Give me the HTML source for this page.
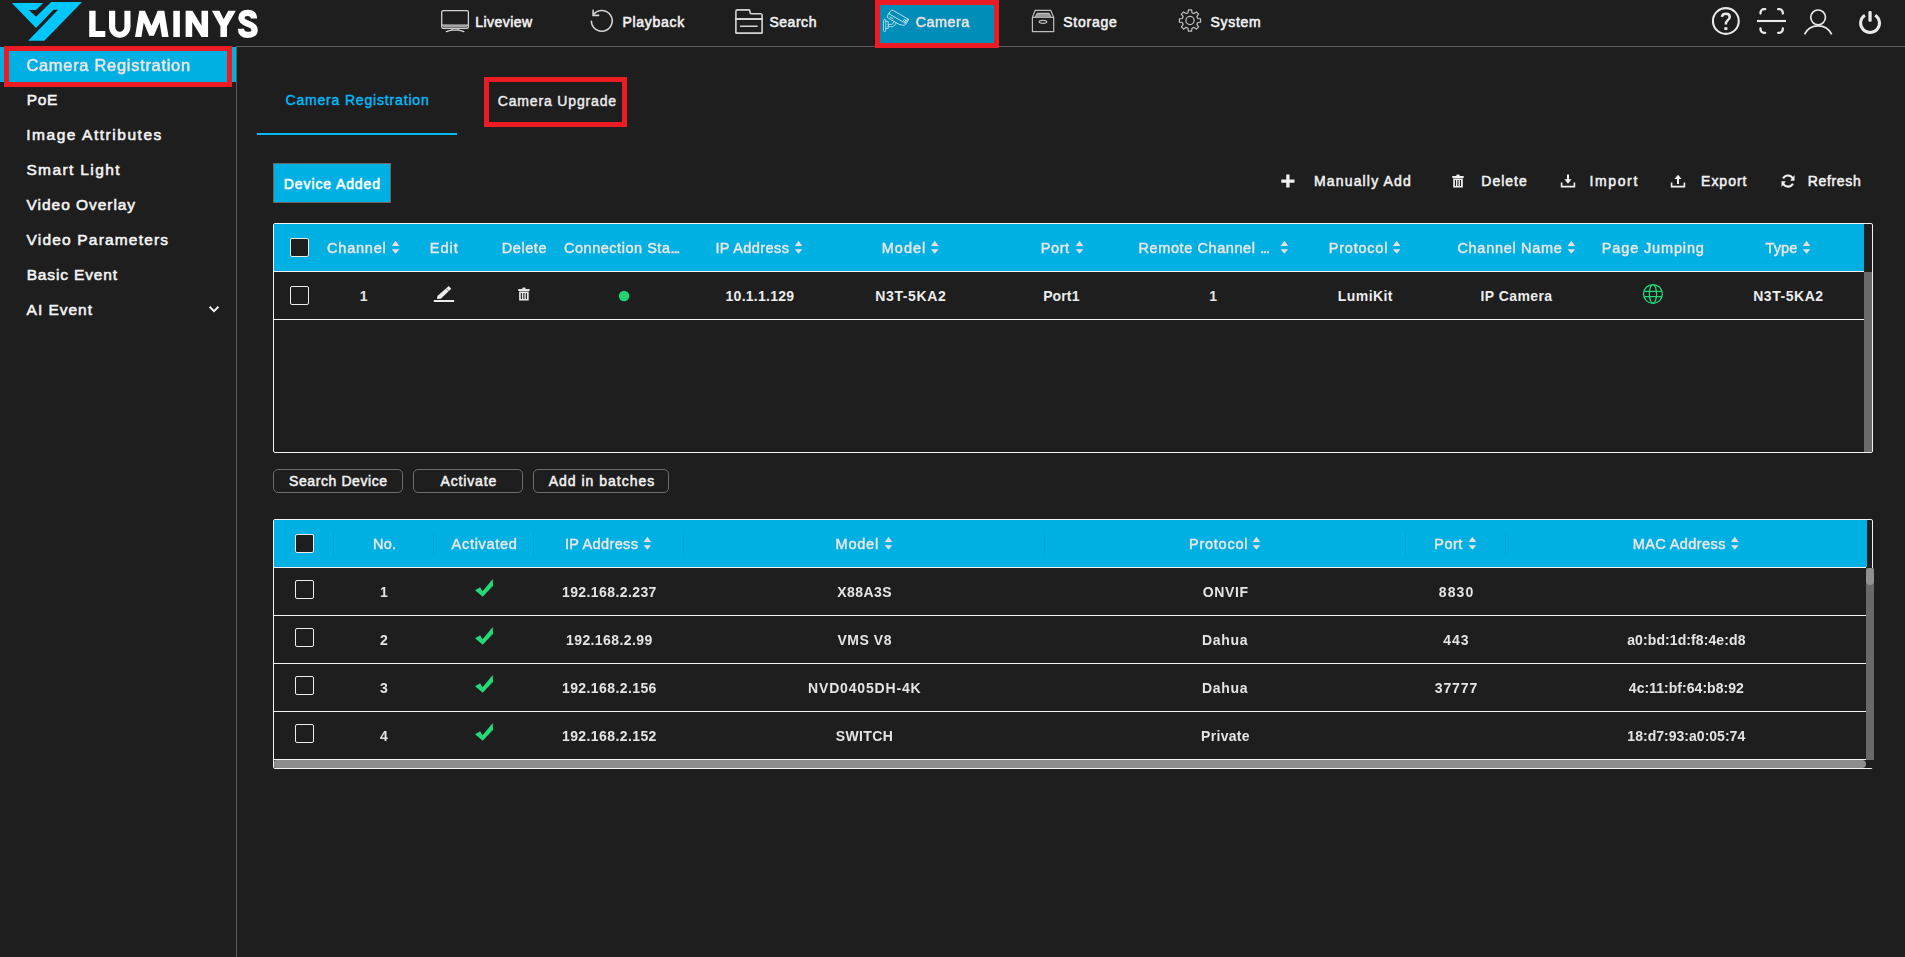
<!DOCTYPE html>
<html><head><meta charset="utf-8"><title>Camera Registration</title><style>
*{margin:0;padding:0;box-sizing:border-box}
html,body{width:1905px;height:957px;overflow:hidden;background:#1e1e1e}
body{position:relative;font-family:"Liberation Sans",sans-serif;font-weight:400}
.t{position:absolute;white-space:nowrap;line-height:20px;height:20px;font-weight:400}
.a{position:absolute}
.cb{position:absolute;width:19px;height:19px;border:1px solid #ececec;border-radius:2px;background:#1e1e1e}
.btn{position:absolute;height:24px;border:1px solid #6c6c6c;border-radius:5px;top:469px}
.hl{position:absolute;height:1px;background:#f2f2f2}
.sep{position:absolute;width:1px;height:22px;top:533px;background:rgba(0,0,0,.07)}
svg{position:absolute;left:0;top:0}
</style></head>
<body>
<div class="a" style="left:236px;top:46px;width:1669px;height:1px;background:#5c5c5c"></div>
<div class="a" style="left:236px;top:46px;width:1px;height:911px;background:#5e5a5a"></div>
<div class="a" style="left:0;top:47px;width:236px;height:35px;background:#00b0e2"></div>
<div class="a" style="left:880px;top:5px;width:114px;height:38px;background:#008db9"></div>
<div class="a" style="left:257px;top:133px;width:200px;height:2px;background:#00bbfc"></div>
<div class="a" style="left:273px;top:163px;width:118px;height:40px;background:#00b0e2;border:1px solid #6b6460"></div>
<div class="a" style="left:273px;top:223px;width:1600px;height:230px;border:1px solid #f2f2f2;border-radius:2px"></div>
<div class="a" style="left:274px;top:224px;width:1590px;height:47px;background:#00b0e2"></div>
<div class="hl" style="left:274px;top:271px;width:1590px"></div>
<div class="hl" style="left:274px;top:319px;width:1590px"></div>
<div class="a" style="left:1864px;top:272px;width:8px;height:180px;background:#696969"></div>
<div class="a" style="left:273px;top:519px;width:1600px;height:250px;border:1px solid #f2f2f2;border-radius:2px"></div>
<div class="a" style="left:274px;top:520px;width:1593px;height:47px;background:#00b0e2"></div>
<div class="hl" style="left:274px;top:567px;width:1592px"></div>
<div class="hl" style="left:274px;top:615px;width:1592px"></div>
<div class="hl" style="left:274px;top:663px;width:1592px"></div>
<div class="hl" style="left:274px;top:711px;width:1592px"></div>
<div class="hl" style="left:274px;top:759px;width:1592px"></div>
<div class="a" style="left:1866px;top:568px;width:8px;height:192px;background:#696969"></div>
<div class="a" style="left:1866px;top:568px;width:8px;height:17px;background:#909090;border-radius:4px"></div>
<div class="a" style="left:1866px;top:760px;width:8px;height:8px;background:#1e1e1e"></div>
<div class="a" style="left:274px;top:760px;width:1592px;height:8px;background:#8c8c8c;border-radius:2px 4px 4px 2px"></div>
<div class="sep" style="left:333px"></div>
<div class="sep" style="left:433px"></div>
<div class="sep" style="left:533px"></div>
<div class="sep" style="left:683px"></div>
<div class="sep" style="left:1044px"></div>
<div class="sep" style="left:1405px"></div>
<div class="sep" style="left:1505px"></div>
<div class="cb" style="left:290px;top:238px"></div>
<div class="cb" style="left:290px;top:286px"></div>
<div class="cb" style="left:295px;top:534px"></div>
<div class="cb" style="left:295px;top:580px"></div>
<div class="cb" style="left:295px;top:628px"></div>
<div class="cb" style="left:295px;top:676px"></div>
<div class="cb" style="left:295px;top:724px"></div>
<div class="btn" style="left:273px;width:130px"></div>
<div class="btn" style="left:413px;width:110px"></div>
<div class="btn" style="left:533px;width:136px"></div>
<svg width="1905" height="957" viewBox="0 0 1905 957">
<polygon fill="#00c8ff" points="11.9,3 43.2,3 36,9.9 28.9,9.9 36,16.8 51.2,2.1 82,2.1 44.3,40.7 28.2,40.7 58.1,9.7 53.5,9.7 36,28"/>
<g fill="#fff">
<polygon points="89.2,10.8 95.6,10.8 95.6,30.9 105.3,30.9 105.3,37.05 89.2,37.05"/>
<path d="M109 10.8h6.2v15.6a4.6 5.3 0 0 0 9.2 0v-15.6h6.1v15.8a10.75 11.2 0 0 1-21.5 0z"/>
<polygon points="135,37.05 139.3,10.8 144.9,10.8 151.56,25.7 157.7,10.8 164.3,10.8 168.6,37.05 161.95,37.05 159.6,22.4 153.9,35.65 149.2,35.65 143.76,22.4 141.4,37.05"/>
<rect x="173.3" y="10.8" width="6.55" height="26.25"/>
<polygon points="185.64,37.05 185.64,10.8 192.45,10.8 201.5,25.67 201.5,10.8 208.07,10.8 208.07,37.05 201.5,37.05 192.2,21.9 192.2,37.05"/>
<polygon points="211.85,10.8 219.4,10.8 223.7,19.37 228.23,10.8 235.8,10.8 226.97,26.18 226.97,37.05 220.42,37.05 220.42,26.18"/>
</g>
<path fill="none" stroke="#fff" stroke-width="6.3" d="M253.94 18.62C253.94 14.84 251.67 12.92 247.64 12.92C243.6 12.92 241.44 14.84 241.44 17.86C241.44 21.14 244.1 22.4 247.89 23.76C252.17 25.17 254.59 26.68 254.59 30.2C254.59 33.23 251.92 34.9 247.64 34.9C243.35 34.9 240.93 32.73 240.93 28.7"/>
<g fill="none" stroke="#d4d4d4" stroke-width="1.3" stroke-linejoin="round" stroke-linecap="round">
<rect x="441.7" y="10.6" width="26.7" height="17.7" rx="1.6"/><path d="M441.7 25.1H468.4M443.5 26.7H466.6" stroke-width="1.1"/><path d="M452 28.5v1.6M458 28.5v1.6M446.3 31.6q3-1.4 6-1.5h5.6q3 .1 6 1.5" />
</g>
<g fill="none" stroke="#d4d4d4" stroke-width="1.6" stroke-linecap="round">
<path d="M593.9 14.1A10.4 10.4 0 1 1 591.4 21.2"/><path d="M593.1 10.2V15.4H598.6" stroke-linejoin="miter"/>
<path stroke-linejoin="round" d="M735.9 33.1V11.5a1.6 1.6 0 0 1 1.6-1.6H748.4a1.6 1.6 0 0 1 1.6 1.6V12.2a1.6 1.6 0 0 0 1.6 1.6H760.5a1.6 1.6 0 0 1 1.6 1.6V33.1Z"/><path stroke-width="2" d="M735.9 19.1H762.1"/><path d="M740.6 26.3H757.1"/>
</g>
<g fill="none" stroke="#c3e3ed" stroke-width="0.85" stroke-linejoin="round" stroke-linecap="round">
<rect x="883.5" y="19.6" width="2.3" height="12" rx="1.15"/>
<path d="M885.8 21.3H888.2V28.6H885.8M888.2 24.5L891.7 24.4Q893.4 23.8 893.9 21.9M888.2 26.7L893 26.6Q895.2 25.6 896 23.2"/>
<g transform="translate(892.54 10.08) rotate(30)"><path d="M18.6 0H0.9Q-1.2 0-1.2 2.1V5H17.5M18.6 0V5.7Q18.4 7.7 16.3 8.1L12.8 9.1H0.6Q-1.6 9.1-1.6 7V4.2M1.3 7.2H4.8M17.5 5V0.2"/><circle cx="15.6" cy="2.9" r="1.05"/></g>
</g>
<g fill="none" stroke="#bdbdbd" stroke-width="1.2" stroke-linejoin="round">
<rect x="1032.4" y="17.4" width="21.3" height="14.2"/><path d="M1032.4 17.4L1035.2 10.3H1050.7L1053.7 17.4"/><path fill="#9a9a9a" stroke="none" d="M1034.6 17.4L1037.4 13.3H1048.8L1051.4 17.4Z"/><path d="M1035.2 17L1037.4 13.3H1048.8L1050.9 17"/><ellipse cx="1043" cy="21.8" rx="3.8" ry="1.5"/>
</g>
<polygon fill="none" stroke="#bdbdbd" stroke-width="1.25" stroke-linejoin="round" points="1188.00,12.75 1188.42,9.92 1191.58,9.92 1192.00,12.75 1194.06,13.61 1196.36,11.90 1198.60,14.14 1196.89,16.44 1197.75,18.50 1200.58,18.92 1200.58,22.08 1197.75,22.50 1196.89,24.56 1198.60,26.86 1196.36,29.10 1194.06,27.39 1192.00,28.25 1191.58,31.08 1188.42,31.08 1188.00,28.25 1185.94,27.39 1183.64,29.10 1181.40,26.86 1183.11,24.56 1182.25,22.50 1179.42,22.08 1179.42,18.92 1182.25,18.50 1183.11,16.44 1181.40,14.14 1183.64,11.90 1185.94,13.61"/>
<circle cx="1190.0" cy="20.5" r="4.1" fill="none" stroke="#bdbdbd" stroke-width="1.25"/>
<g fill="none" stroke="#e9e9e9">
<circle cx="1725.85" cy="21" r="12.9" stroke-width="2.1"/>
<path d="M1721.9 16.9Q1722.3 13.7 1725.9 13.7Q1729.7 13.7 1729.7 16.9Q1729.7 18.7 1727.6 20.4Q1725.8 21.9 1725.8 24.6" stroke-width="2.5"/>
<rect x="1724.3" y="27.2" width="3.1" height="2.8" fill="#e9e9e9" stroke="none"/>
<path stroke-linecap="round" stroke-width="2.3" d="M1760.5 13.5V12.7a3.5 3.5 0 0 1 3.5-3.5H1765.2M1778.1 9.2H1779.3a3.5 3.5 0 0 1 3.5 3.5V13.5M1782.8 28.3V29.3a3.5 3.5 0 0 1-3.5 3.5H1778.1M1765.2 32.8H1764a3.5 3.5 0 0 1-3.5-3.5V28.3"/><path d="M1757 21H1786" stroke-width="2.1"/>
<circle cx="1818.1" cy="17.35" r="7.35" stroke-width="1.65"/><path d="M1804.5 34.4A15.1 15.1 0 0 1 1831.7 34.4" stroke-width="1.7"/>
<path d="M1864.9 15.2A9.45 9.45 0 1 0 1875.2 15.2" stroke-width="3"/>
<rect x="1868.4" y="11.1" width="3.3" height="10.7" rx="1.3" fill="#e9e9e9" stroke="none"/>
</g>
<path d="M209.6 306.8L214 311.2L218.4 306.8" fill="none" stroke="#f0f0f0" stroke-width="2"/>
<path d="M1281.3 181.1H1294.5M1287.9 174.6V187.6" stroke="#f0f0f0" stroke-width="3.3"/>
<g fill="#f0f0f0"><rect x="1456.3" y="174.5" width="3.4" height="2" rx="1"/><rect x="1452.2" y="175.9" width="11.6" height="2" rx=".6"/><path fill-rule="evenodd" d="M1453.2 178.4h9.6v9.2h-9.6zM1454.9 179.9v6h1.1v-6zM1457.4 179.9v6h1.1v-6zM1459.9 179.9v6h1.1v-6z"/></g>
<g fill="none" stroke="#f0f0f0" stroke-width="1.6"><path d="M1561.6 182.5V186.6H1574.4V182.5"/><path d="M1671.6 182.5V186.6H1684.4V182.5"/></g>
<path fill="#f0f0f0" d="M1567 174.4h2v4.9h2.6L1568 183.7 1564.4 179.3h2.6z"/>
<path fill="#f0f0f0" d="M1677 184h2v-4.9h2.6L1678 174.7 1674.4 179.1h2.6z"/>
<g fill="none" stroke="#f0f0f0" stroke-width="2.1"><path d="M1783.1 178.5A5.4 5.4 0 0 1 1792.9 178.7"/><path d="M1792.9 183.6A5.4 5.4 0 0 1 1783.1 183.4"/></g>
<path fill="#f0f0f0" d="M1794.5 175V180.8H1790.2Z"/><path fill="#f0f0f0" d="M1781.5 187V181.2H1785.8Z"/>
<path fill="#e6e1e1" d="M391.8 246.0l3.75-5.2 3.75 5.2zM391.8 249.2l3.75 4.6 3.75-4.6z"/>
<path fill="#e6e1e1" d="M794.8 246.0l3.75-5.2 3.75 5.2zM794.8 249.2l3.75 4.6 3.75-4.6z"/>
<path fill="#e6e1e1" d="M931.0 246.0l3.75-5.2 3.75 5.2zM931.0 249.2l3.75 4.6 3.75-4.6z"/>
<path fill="#e6e1e1" d="M1075.8 246.0l3.75-5.2 3.75 5.2zM1075.8 249.2l3.75 4.6 3.75-4.6z"/>
<path fill="#e6e1e1" d="M1280.6 246.0l3.75-5.2 3.75 5.2zM1280.6 249.2l3.75 4.6 3.75-4.6z"/>
<path fill="#e6e1e1" d="M1392.9 246.0l3.75-5.2 3.75 5.2zM1392.9 249.2l3.75 4.6 3.75-4.6z"/>
<path fill="#e6e1e1" d="M1567.6 246.0l3.75-5.2 3.75 5.2zM1567.6 249.2l3.75 4.6 3.75-4.6z"/>
<path fill="#e6e1e1" d="M1802.8 246.0l3.75-5.2 3.75 5.2zM1802.8 249.2l3.75 4.6 3.75-4.6z"/>
<path fill="#e6e1e1" d="M643.6 542.0l3.75-5.2 3.75 5.2zM643.6 545.2l3.75 4.6 3.75-4.6z"/>
<path fill="#e6e1e1" d="M884.8 542.0l3.75-5.2 3.75 5.2zM884.8 545.2l3.75 4.6 3.75-4.6z"/>
<path fill="#e6e1e1" d="M1252.7 542.0l3.75-5.2 3.75 5.2zM1252.7 545.2l3.75 4.6 3.75-4.6z"/>
<path fill="#e6e1e1" d="M1468.7 542.0l3.75-5.2 3.75 5.2zM1468.7 545.2l3.75 4.6 3.75-4.6z"/>
<path fill="#e6e1e1" d="M1731.0 542.0l3.75-5.2 3.75 5.2zM1731.0 545.2l3.75 4.6 3.75-4.6z"/>
<path fill="#ececec" d="M433.8 300.1H454.1V302H433.8zM437 298.9L437.4 296 448.8 286.1 451.3 288.8 440.8 298.8z"/>
<path stroke="#1e1e1e" stroke-width=".5" d="M446.3 288.6L448.7 291"/>
<g fill="#e6e6e6"><rect x="522.2" y="287.5" width="3.4" height="2" rx="1"/><rect x="518.1" y="288.9" width="11.6" height="2" rx=".6"/><path fill-rule="evenodd" d="M519.1 291.4h9.6v9.2h-9.6zM520.8 292.9v6h1.1v-6zM523.3 292.9v6h1.1v-6zM525.8 292.9v6h1.1v-6z"/></g>
<circle cx="624.1" cy="296" r="5.3" fill="#1fd36f"/>
<g fill="none" stroke="#21db7b" stroke-width="1.25"><circle cx="1652.95" cy="293.95" r="9.4"/><ellipse cx="1652.95" cy="293.95" rx="3.6" ry="9.4"/><path d="M1644.2 291.4H1661.7M1644.2 296.5H1661.7"/></g>
<polygon fill="#21db7b" transform="translate(0 0)" points="475.1,590.3 480.2,587.3 482.4,591.4 492.7,578.9 493,585.7 482.7,596.8"/>
<polygon fill="#21db7b" transform="translate(0 48)" points="475.1,590.3 480.2,587.3 482.4,591.4 492.7,578.9 493,585.7 482.7,596.8"/>
<polygon fill="#21db7b" transform="translate(0 96)" points="475.1,590.3 480.2,587.3 482.4,591.4 492.7,578.9 493,585.7 482.7,596.8"/>
<polygon fill="#21db7b" transform="translate(0 144)" points="475.1,590.3 480.2,587.3 482.4,591.4 492.7,578.9 493,585.7 482.7,596.8"/>
</svg>
<span class="t" style="left:475.25px;top:12.00px;font-size:14px;letter-spacing:0.461px;color:#f2f2f2;-webkit-text-stroke:0.55px #f2f2f2">Liveview</span>
<span class="t" style="left:622.51px;top:12.00px;font-size:14px;letter-spacing:0.705px;color:#f2f2f2;-webkit-text-stroke:0.55px #f2f2f2">Playback</span>
<span class="t" style="left:769.42px;top:12.00px;font-size:14px;letter-spacing:0.532px;color:#f2f2f2;-webkit-text-stroke:0.55px #f2f2f2">Search</span>
<span class="t" style="left:1063.22px;top:12.00px;font-size:14px;letter-spacing:0.759px;color:#f2f2f2;-webkit-text-stroke:0.55px #f2f2f2">Storage</span>
<span class="t" style="left:1210.42px;top:12.00px;font-size:14px;letter-spacing:0.738px;color:#f2f2f2;-webkit-text-stroke:0.55px #f2f2f2">System</span>
<span class="t" style="left:26.68px;top:90.00px;font-size:15.5px;letter-spacing:0.627px;color:#f4f4f4;-webkit-text-stroke:0.55px #f4f4f4">PoE</span>
<span class="t" style="left:26.29px;top:125.00px;font-size:15.5px;letter-spacing:1.533px;color:#f4f4f4;-webkit-text-stroke:0.55px #f4f4f4">Image Attributes</span>
<span class="t" style="left:26.42px;top:160.00px;font-size:15.5px;letter-spacing:1.378px;color:#f4f4f4;-webkit-text-stroke:0.55px #f4f4f4">Smart Light</span>
<span class="t" style="left:26.57px;top:195.00px;font-size:15.5px;letter-spacing:0.957px;color:#f4f4f4;-webkit-text-stroke:0.55px #f4f4f4">Video Overlay</span>
<span class="t" style="left:26.57px;top:230.00px;font-size:15.5px;letter-spacing:1.180px;color:#f4f4f4;-webkit-text-stroke:0.55px #f4f4f4">Video Parameters</span>
<span class="t" style="left:26.68px;top:265.00px;font-size:15.5px;letter-spacing:0.860px;color:#f4f4f4;-webkit-text-stroke:0.55px #f4f4f4">Basic Event</span>
<span class="t" style="left:26.58px;top:300.00px;font-size:15.5px;letter-spacing:0.974px;color:#f4f4f4;-webkit-text-stroke:0.55px #f4f4f4">AI Event</span>
<span class="t" style="left:285.46px;top:90.00px;font-size:14px;letter-spacing:0.827px;color:#00bcfa;-webkit-text-stroke:0.4px #00bcfa">Camera Registration</span>
<span class="t" style="left:497.78px;top:91.00px;font-size:14px;letter-spacing:0.844px;color:#ededed;-webkit-text-stroke:0.45px #ededed">Camera Upgrade</span>
<span class="t" style="left:283.86px;top:174.00px;font-size:14px;letter-spacing:0.881px;color:#ffffff;-webkit-text-stroke:0.55px #ffffff">Device Added</span>
<span class="t" style="left:1314.04px;top:171.00px;font-size:14px;letter-spacing:1.154px;color:#f2f2f2;-webkit-text-stroke:0.5px #f2f2f2">Manually Add</span>
<span class="t" style="left:1481.34px;top:171.00px;font-size:14px;letter-spacing:0.990px;color:#f2f2f2;-webkit-text-stroke:0.5px #f2f2f2">Delete</span>
<span class="t" style="left:1589.61px;top:171.00px;font-size:14px;letter-spacing:1.597px;color:#f2f2f2;-webkit-text-stroke:0.5px #f2f2f2">Import</span>
<span class="t" style="left:1701.05px;top:171.00px;font-size:14px;letter-spacing:0.991px;color:#f2f2f2;-webkit-text-stroke:0.5px #f2f2f2">Export</span>
<span class="t" style="left:1807.73px;top:171.00px;font-size:14px;letter-spacing:0.669px;color:#f2f2f2;-webkit-text-stroke:0.5px #f2f2f2">Refresh</span>
<span class="t" style="left:725.55px;top:286.00px;font-size:14px;letter-spacing:0.256px;color:#ececec;font-weight:700">10.1.1.129</span>
<span class="t" style="left:875.26px;top:286.00px;font-size:14px;letter-spacing:0.634px;color:#ececec;font-weight:700">N3T-5KA2</span>
<span class="t" style="left:1043.13px;top:286.00px;font-size:14px;letter-spacing:0.125px;color:#ececec;font-weight:700">Port1</span>
<span class="t" style="left:1337.87px;top:286.00px;font-size:14px;letter-spacing:0.407px;color:#ececec;font-weight:700">LumiKit</span>
<span class="t" style="left:1480.57px;top:286.00px;font-size:14px;letter-spacing:0.416px;color:#ececec;font-weight:700">IP Camera</span>
<span class="t" style="left:1753.13px;top:286.00px;font-size:14px;letter-spacing:0.556px;color:#ececec;font-weight:700">N3T-5KA2</span>
<span class="t" style="left:359.70px;top:286.00px;font-size:14px;letter-spacing:0.000px;color:#e4e4e4;font-weight:700">1</span>
<span class="t" style="left:1209.19px;top:286.00px;font-size:14px;letter-spacing:0.000px;color:#e4e4e4;font-weight:700">1</span>
<span class="t" style="left:289.03px;top:471.00px;font-size:14px;letter-spacing:0.589px;color:#f2f2f2;-webkit-text-stroke:0.5px #f2f2f2">Search Device</span>
<span class="t" style="left:440.47px;top:471.00px;font-size:14px;letter-spacing:0.852px;color:#f2f2f2;-webkit-text-stroke:0.5px #f2f2f2">Activate</span>
<span class="t" style="left:548.63px;top:471.00px;font-size:14px;letter-spacing:1.004px;color:#f2f2f2;-webkit-text-stroke:0.5px #f2f2f2">Add in batches</span>
<div style="position:absolute;left:0;top:0;width:1905px;height:957px;will-change:transform">
<span class="t" style="left:915.72px;top:12.00px;font-size:14.5px;letter-spacing:0.427px;color:#ebe2e2;-webkit-text-stroke:0.5px #ebe2e2">Camera</span>
<span class="t" style="left:26.40px;top:55.00px;font-size:16.5px;letter-spacing:0.692px;color:#ece6e6;-webkit-text-stroke:0.5px #ece6e6">Camera Registration</span>
<span class="t" style="left:327.10px;top:238.00px;font-size:14.5px;letter-spacing:0.773px;color:#ebe6e6;-webkit-text-stroke:0.45px #ebe6e6">Channel</span>
<span class="t" style="left:429.84px;top:238.00px;font-size:14.5px;letter-spacing:0.957px;color:#ebe6e6;-webkit-text-stroke:0.45px #ebe6e6">Edit</span>
<span class="t" style="left:501.78px;top:238.00px;font-size:14.5px;letter-spacing:0.558px;color:#ebe6e6;-webkit-text-stroke:0.45px #ebe6e6">Delete</span>
<span class="t" style="left:563.98px;top:238.00px;font-size:14.5px;letter-spacing:0.527px;color:#ebe6e6;-webkit-text-stroke:0.45px #ebe6e6">Connection Sta<span style="letter-spacing:-1.1px">...</span></span>
<span class="t" style="left:715.41px;top:238.00px;font-size:14.5px;letter-spacing:0.407px;color:#ebe6e6;-webkit-text-stroke:0.45px #ebe6e6">IP Address</span>
<span class="t" style="left:881.84px;top:238.00px;font-size:14.5px;letter-spacing:0.956px;color:#ebe6e6;-webkit-text-stroke:0.45px #ebe6e6">Model</span>
<span class="t" style="left:1040.70px;top:238.00px;font-size:14.5px;letter-spacing:0.614px;color:#ebe6e6;-webkit-text-stroke:0.45px #ebe6e6">Port</span>
<span class="t" style="left:1138.57px;top:238.00px;font-size:14.5px;letter-spacing:0.583px;color:#ebe6e6;-webkit-text-stroke:0.45px #ebe6e6">Remote Channel&nbsp;<span style="letter-spacing:-1.1px">...</span></span>
<span class="t" style="left:1328.84px;top:238.00px;font-size:14.5px;letter-spacing:0.772px;color:#ebe6e6;-webkit-text-stroke:0.45px #ebe6e6">Protocol</span>
<span class="t" style="left:1457.44px;top:238.00px;font-size:14.5px;letter-spacing:0.697px;color:#ebe6e6;-webkit-text-stroke:0.45px #ebe6e6">Channel Name</span>
<span class="t" style="left:1601.84px;top:238.00px;font-size:14.5px;letter-spacing:0.848px;color:#ebe6e6;-webkit-text-stroke:0.45px #ebe6e6">Page Jumping</span>
<span class="t" style="left:1765.55px;top:238.00px;font-size:14.5px;letter-spacing:0.077px;color:#ebe6e6;-webkit-text-stroke:0.45px #ebe6e6">Type</span>
<span class="t" style="left:373.01px;top:534.00px;font-size:14.5px;letter-spacing:0.174px;color:#ebe6e6;-webkit-text-stroke:0.45px #ebe6e6">No.</span>
<span class="t" style="left:451.57px;top:534.00px;font-size:14.5px;letter-spacing:0.706px;color:#ebe6e6;-webkit-text-stroke:0.45px #ebe6e6">Activated</span>
<span class="t" style="left:564.89px;top:534.00px;font-size:14.5px;letter-spacing:0.353px;color:#ebe6e6;-webkit-text-stroke:0.45px #ebe6e6">IP Address</span>
<span class="t" style="left:835.57px;top:534.00px;font-size:14.5px;letter-spacing:0.774px;color:#ebe6e6;-webkit-text-stroke:0.45px #ebe6e6">Model</span>
<span class="t" style="left:1188.99px;top:534.00px;font-size:14.5px;letter-spacing:0.751px;color:#ebe6e6;-webkit-text-stroke:0.45px #ebe6e6">Protocol</span>
<span class="t" style="left:1434.33px;top:534.00px;font-size:14.5px;letter-spacing:0.491px;color:#ebe6e6;-webkit-text-stroke:0.45px #ebe6e6">Port</span>
<span class="t" style="left:1632.70px;top:534.00px;font-size:14.5px;letter-spacing:0.411px;color:#ebe6e6;-webkit-text-stroke:0.45px #ebe6e6">MAC Address</span>
<span class="t" style="left:379.96px;top:582.00px;font-size:14px;letter-spacing:0.000px;color:#e4e4e4;font-weight:700">1</span>
<span class="t" style="left:561.99px;top:582.00px;font-size:14px;letter-spacing:0.407px;color:#e4e4e4;font-weight:700">192.168.2.237</span>
<span class="t" style="left:837.23px;top:582.00px;font-size:14px;letter-spacing:0.429px;color:#e4e4e4;font-weight:700">X88A3S</span>
<span class="t" style="left:1202.76px;top:582.00px;font-size:14px;letter-spacing:0.651px;color:#e4e4e4;font-weight:700">ONVIF</span>
<span class="t" style="left:1438.87px;top:582.00px;font-size:14px;letter-spacing:1.077px;color:#e4e4e4;font-weight:700">8830</span>
<span class="t" style="left:380.12px;top:630.00px;font-size:14px;letter-spacing:0.000px;color:#e4e4e4;font-weight:700">2</span>
<span class="t" style="left:565.99px;top:630.00px;font-size:14px;letter-spacing:0.410px;color:#e4e4e4;font-weight:700">192.168.2.99</span>
<span class="t" style="left:837.41px;top:630.00px;font-size:14px;letter-spacing:0.547px;color:#e4e4e4;font-weight:700">VMS V8</span>
<span class="t" style="left:1202.07px;top:630.00px;font-size:14px;letter-spacing:0.669px;color:#e4e4e4;font-weight:700">Dahua</span>
<span class="t" style="left:1443.33px;top:630.00px;font-size:14px;letter-spacing:0.986px;color:#e4e4e4;font-weight:700">443</span>
<span class="t" style="left:1627.24px;top:630.00px;font-size:14px;letter-spacing:0.094px;color:#e4e4e4;font-weight:700">a0:bd:1d:f8:4e:d8</span>
<span class="t" style="left:380.05px;top:678.00px;font-size:14px;letter-spacing:0.000px;color:#e4e4e4;font-weight:700">3</span>
<span class="t" style="left:561.99px;top:678.00px;font-size:14px;letter-spacing:0.406px;color:#e4e4e4;font-weight:700">192.168.2.156</span>
<span class="t" style="left:808.07px;top:678.00px;font-size:14px;letter-spacing:0.828px;color:#e4e4e4;font-weight:700">NVD0405DH-4K</span>
<span class="t" style="left:1202.07px;top:678.00px;font-size:14px;letter-spacing:0.669px;color:#e4e4e4;font-weight:700">Dahua</span>
<span class="t" style="left:1434.74px;top:678.00px;font-size:14px;letter-spacing:0.893px;color:#e4e4e4;font-weight:700">37777</span>
<span class="t" style="left:1628.83px;top:678.00px;font-size:14px;letter-spacing:0.040px;color:#e4e4e4;font-weight:700">4c:11:bf:64:b8:92</span>
<span class="t" style="left:380.09px;top:726.00px;font-size:14px;letter-spacing:0.000px;color:#e4e4e4;font-weight:700">4</span>
<span class="t" style="left:561.99px;top:726.00px;font-size:14px;letter-spacing:0.408px;color:#e4e4e4;font-weight:700">192.168.2.152</span>
<span class="t" style="left:835.80px;top:726.00px;font-size:14px;letter-spacing:0.374px;color:#e4e4e4;font-weight:700">SWITCH</span>
<span class="t" style="left:1201.07px;top:726.00px;font-size:14px;letter-spacing:0.300px;color:#e4e4e4;font-weight:700">Private</span>
<span class="t" style="left:1627.35px;top:726.00px;font-size:14px;letter-spacing:0.022px;color:#e4e4e4;font-weight:700">18:d7:93:a0:05:74</span>
</div>
<div class="a" style="left:4px;top:46px;width:228px;height:41px;border:5px solid #ed1c24"></div>
<div class="a" style="left:875px;top:0;width:124px;height:48px;border:5px solid #ed1c24"></div>
<div class="a" style="left:484px;top:77px;width:143px;height:50px;border:5px solid #ed1c24"></div>
</body></html>
